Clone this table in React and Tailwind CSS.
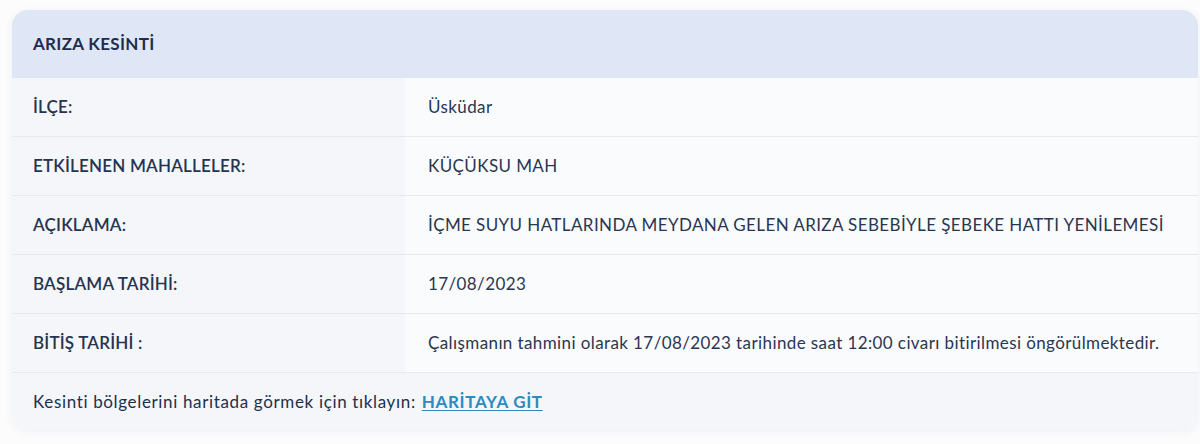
import React from 'react';

const rows = [
  { label: 'İLÇE:', value: 'Üsküdar' },
  { label: 'ETKİLENEN MAHALLELER:', value: 'KÜÇÜKSU MAH' },
  { label: 'AÇIKLAMA:', value: 'İÇME SUYU HATLARINDA MEYDANA GELEN ARIZA SEBEBİYLE ŞEBEKE HATTI YENİLEMESİ' },
  { label: 'BAŞLAMA TARİHİ:', value: '17/08/2023' },
  { label: 'BİTİŞ TARİHİ :', value: 'Çalışmanın tahmini olarak 17/08/2023 tarihinde saat 12:00 civarı bitirilmesi öngörülmektedir.' },
];

const App = () => {
  return (
    <div className="min-h-[444px] w-[1200px] bg-[#fcfcfd] pt-[10px] pl-[12px] pr-[2px] font-['Lato','Noto_Sans',sans-serif] text-[#26334d]">
      <div className="overflow-hidden rounded-2xl bg-[#f4f6fa] shadow-[0_2px_10px_rgba(30,50,90,0.06)]">
        <div className="flex h-[68px] items-center bg-[#dfe7f6] px-[21px]">
          <h2 className="text-[17px] font-bold tracking-[0.3px] text-[#1e2d4f]">ARIZA KESİNTİ</h2>
        </div>

        {rows.map((row) => (
          <div key={row.label} className="grid h-[59px] grid-cols-[393px_1fr] border-b border-[#e6eaf0]">
            <div className="flex items-center bg-[#f4f6fa] px-[21px] text-[17px] font-semibold tracking-[0.2px] text-[#26344f]">
              {row.label}
            </div>
            <div className="flex items-center bg-[#fafbfd] px-[23px] text-[17px] tracking-[0.4px] text-[#2a3650]">
              {row.value}
            </div>
          </div>
        ))}

        <div className="flex h-[57px] items-center bg-[#f4f6fa] px-[21px] text-[17px] tracking-[0.65px] text-[#23304a]">
          <span>Kesinti bölgelerini haritada görmek için tıklayın:</span>
          <a href="#" className="ml-[6px] font-bold text-[#2a8bc0] underline underline-offset-2">
            HARİTAYA GİT
          </a>
        </div>
      </div>
    </div>
  );
};

export default App;
